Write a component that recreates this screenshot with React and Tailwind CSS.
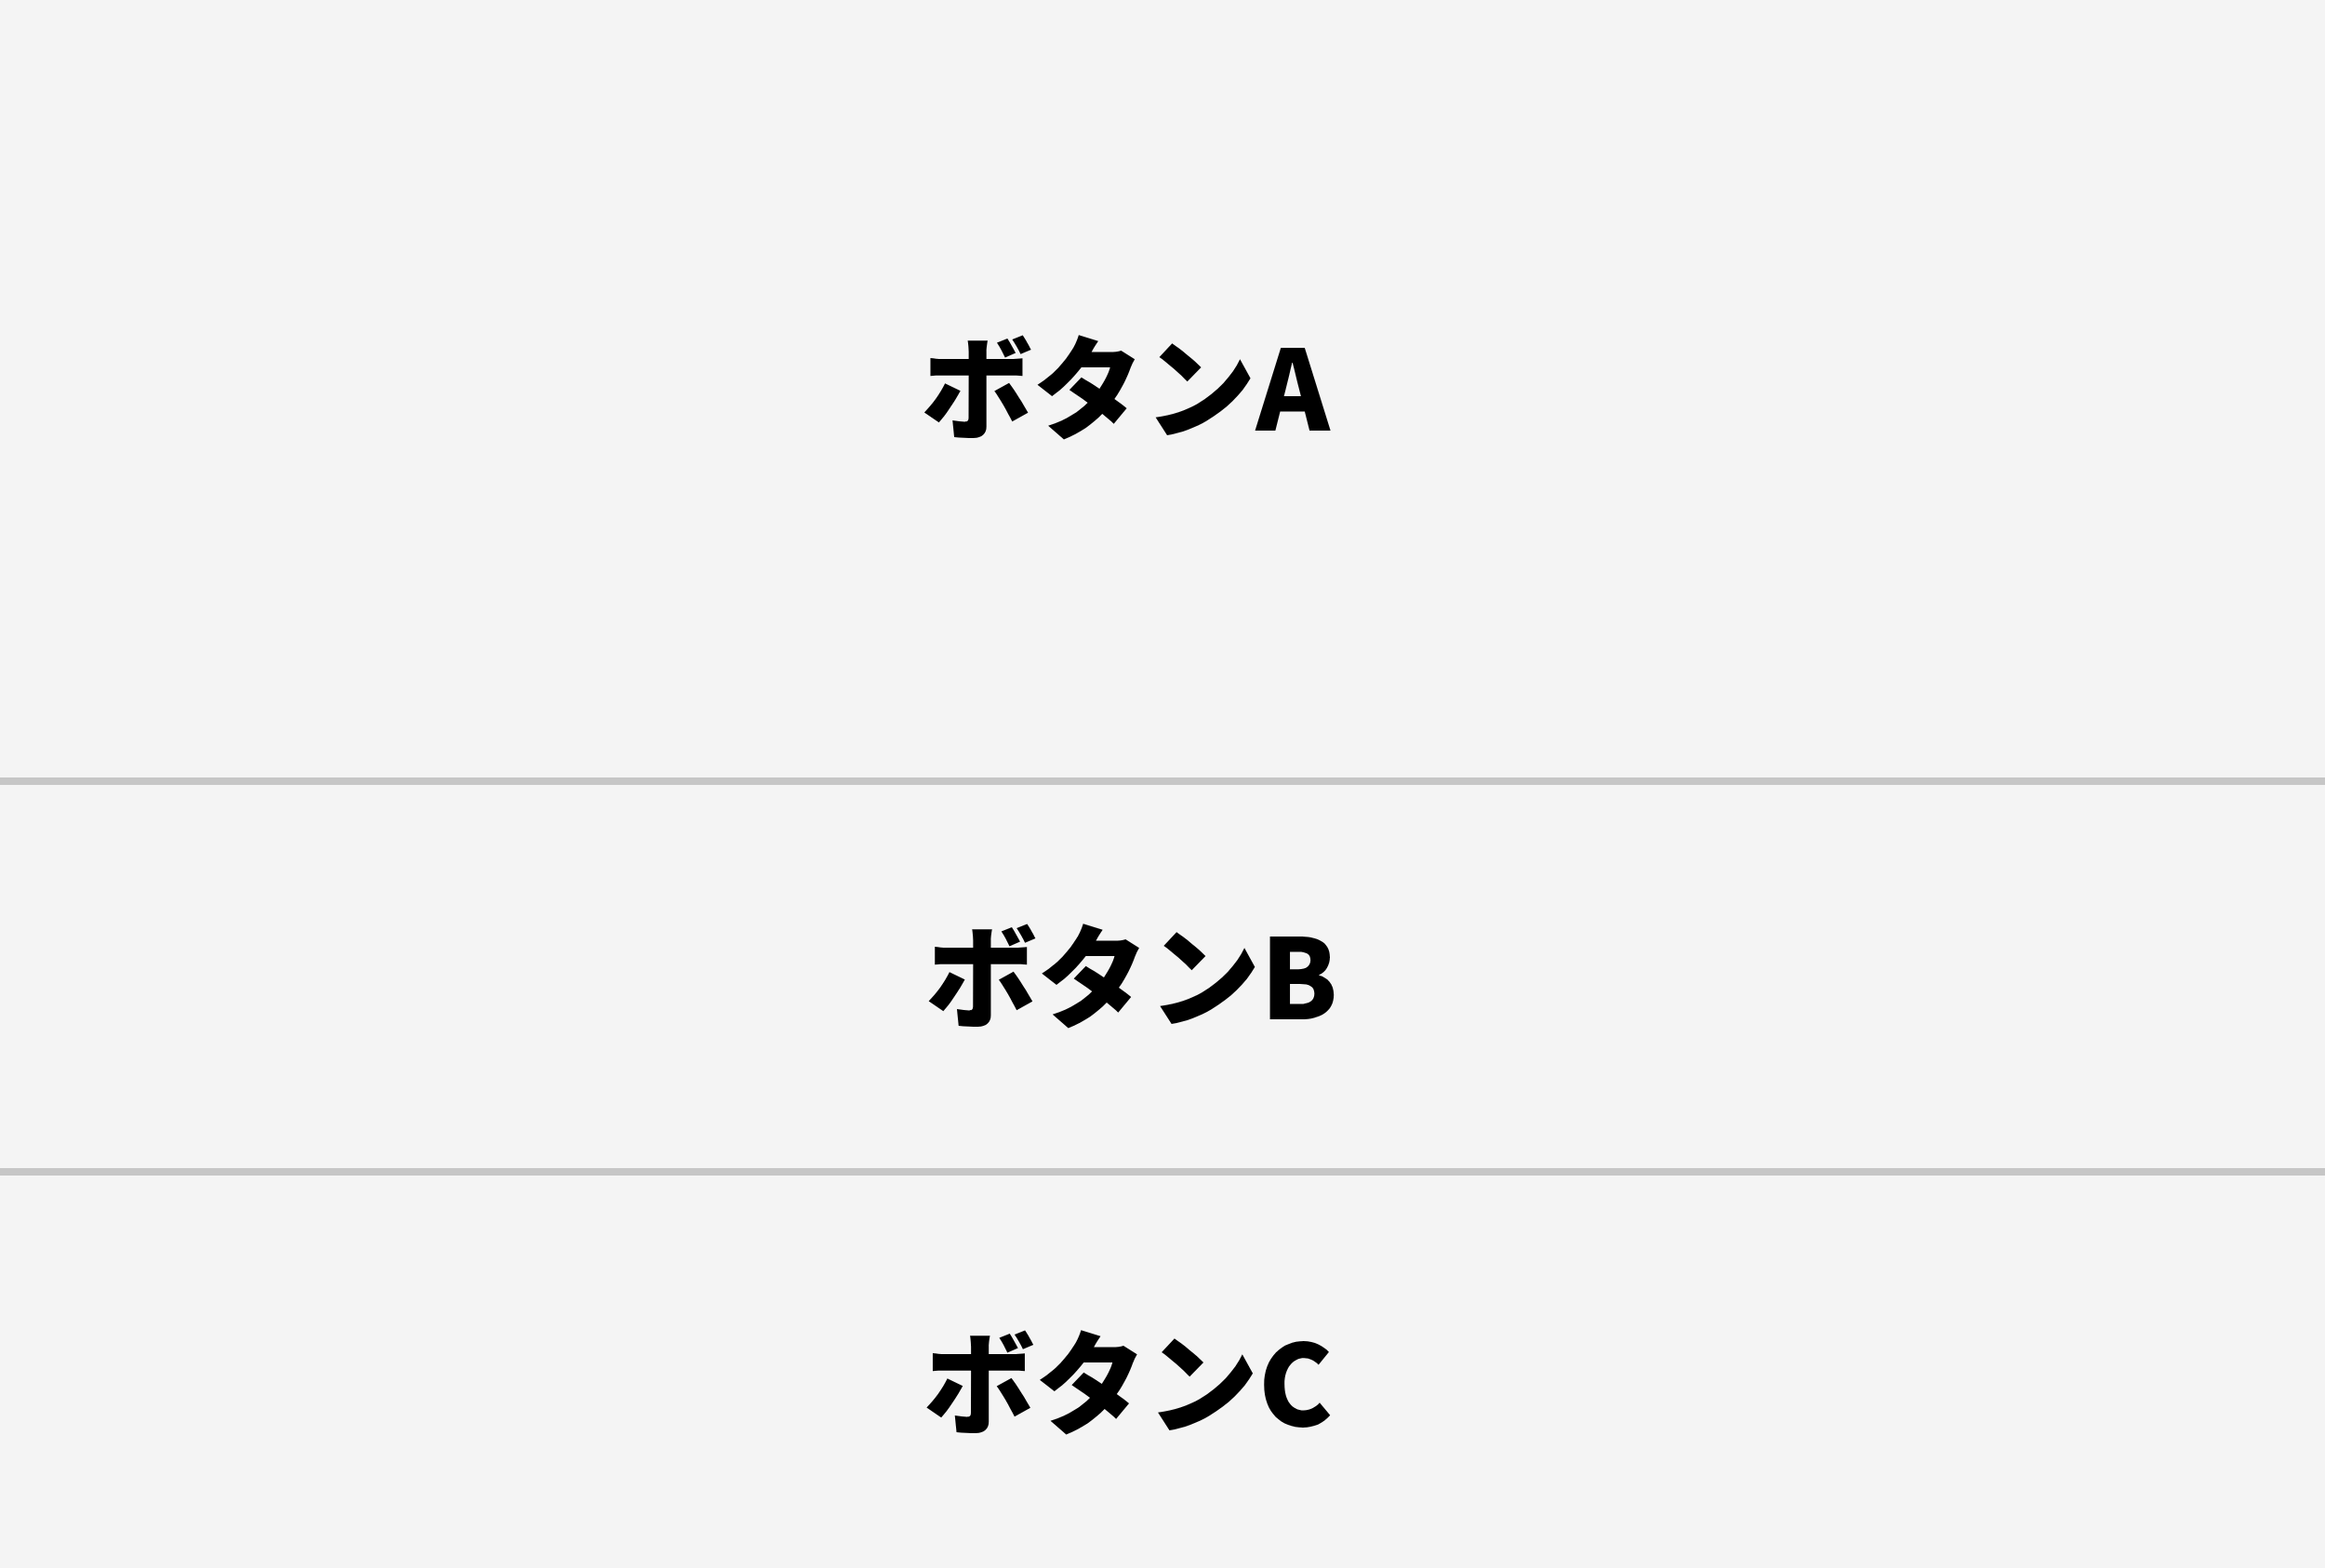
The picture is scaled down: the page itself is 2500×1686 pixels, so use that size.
import React from 'react';

const labels = [
  { text: 'ボタンA', h: 'h-[836px]', pad: 'pr-[80px] pb-[14px]' },
  { text: 'ボタンB', h: 'h-[412px]', pad: 'pr-[66px] pb-[12px]' },
  { text: 'ボタンC', h: 'h-[444px]', pad: 'pr-[74px] pb-[10px]' },
];

export default function App() {
  return (
    <div
      className="h-screen overflow-hidden bg-[#f4f4f4] flex flex-col"
      style={{ fontFamily: '"Noto Sans CJK JP", "Noto Sans", sans-serif' }}
    >
      {labels.map((l, i) => (
        <React.Fragment key={l.text}>
          {i > 0 && <div className="h-[8px] shrink-0 bg-[#c6c6c6]" />}
          <button className={`${l.h} ${l.pad} shrink-0 w-full flex items-center justify-center text-[120px] font-black text-black leading-none`}>
            {l.text}
          </button>
        </React.Fragment>
      ))}
    </div>
  );
}
